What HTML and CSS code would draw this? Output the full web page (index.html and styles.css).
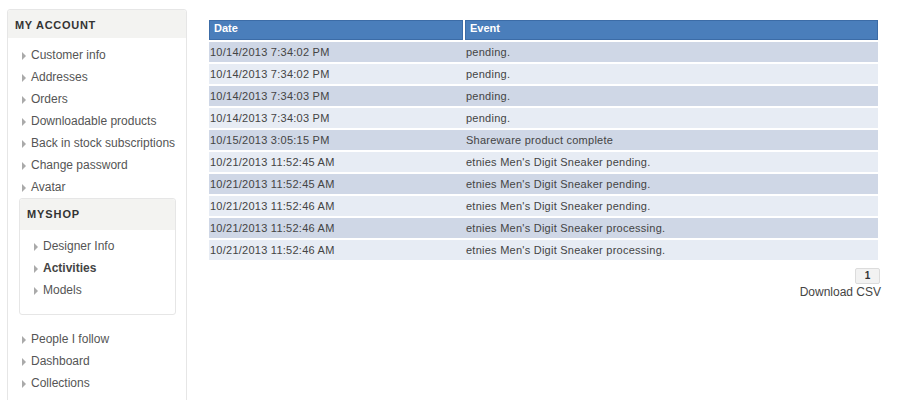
FILE: index.html
```html
<!DOCTYPE html>
<html>
<head>
<meta charset="utf-8">
<link rel="stylesheet" href="styles.css">
</head>
<body>
<div class="page">
  <aside class="sidebar">
    <div class="block-title">MY ACCOUNT</div>
    <ul class="nav">
      <li><span class="tri"></span>Customer info</li>
      <li><span class="tri"></span>Addresses</li>
      <li><span class="tri"></span>Orders</li>
      <li><span class="tri"></span>Downloadable products</li>
      <li><span class="tri"></span>Back in stock subscriptions</li>
      <li><span class="tri"></span>Change password</li>
      <li><span class="tri"></span>Avatar</li>
    </ul>
    <div class="subbox">
      <div class="sub-title">MYSHOP</div>
      <ul class="nav sub-nav">
        <li><span class="tri"></span>Designer Info</li>
        <li class="active"><span class="tri"></span>Activities</li>
        <li><span class="tri"></span>Models</li>
      </ul>
    </div>
    <ul class="nav nav-bottom">
      <li><span class="tri"></span>People I follow</li>
      <li><span class="tri"></span>Dashboard</li>
      <li><span class="tri"></span>Collections</li>
    </ul>
  </aside>
  <main class="content">
    <table class="grid">
      <thead>
        <tr><th class="col-date">Date</th><th>Event</th></tr>
      </thead>
      <tbody>
        <tr class="odd"><td>10/14/2013 7:34:02 PM</td><td>pending.</td></tr>
        <tr class="even"><td>10/14/2013 7:34:02 PM</td><td>pending.</td></tr>
        <tr class="odd"><td>10/14/2013 7:34:03 PM</td><td>pending.</td></tr>
        <tr class="even"><td>10/14/2013 7:34:03 PM</td><td>pending.</td></tr>
        <tr class="odd"><td>10/15/2013 3:05:15 PM</td><td>Shareware product complete</td></tr>
        <tr class="even"><td>10/21/2013 11:52:45 AM</td><td>etnies Men's Digit Sneaker pending.</td></tr>
        <tr class="odd"><td>10/21/2013 11:52:45 AM</td><td>etnies Men's Digit Sneaker pending.</td></tr>
        <tr class="even"><td>10/21/2013 11:52:46 AM</td><td>etnies Men's Digit Sneaker pending.</td></tr>
        <tr class="odd"><td>10/21/2013 11:52:46 AM</td><td>etnies Men's Digit Sneaker processing.</td></tr>
        <tr class="even"><td>10/21/2013 11:52:46 AM</td><td>etnies Men's Digit Sneaker processing.</td></tr>
      </tbody>
    </table>
    <div class="pager"><span class="page-btn">1</span></div>
    <div class="csv">Download CSV</div>
  </main>
</div>
</body>
</html>
```
FILE: styles.css
```css
html, body {
  margin: 0;
  padding: 0;
  background: #fff;
  font-family: Arial, "Liberation Sans", sans-serif;
}
.page {
  display: flex;
  align-items: flex-start;
  padding-left: 7px;
}
.sidebar {
  width: 180px;
  margin-top: 9px;
  border: 1px solid #e6e6e6;
  border-radius: 3px;
  height: 420px;
  box-sizing: border-box;
  flex: none;
}
.block-title {
  background: #f3f3f1;
  height: 28px;
  line-height: 30px;
  padding-left: 7px;
  font-size: 11px;
  font-weight: bold;
  letter-spacing: 0.7px;
  color: #333;
  border-radius: 3px 3px 0 0;
}
.nav {
  list-style: none;
  margin: 0;
  padding: 6px 0 0 14px;
}
.nav li {
  height: 22px;
  line-height: 22px;
  font-size: 12px;
  color: #555;
  display: flex;
  align-items: center;
}
.tri {
  width: 0;
  height: 0;
  border-top: 4px solid transparent;
  border-bottom: 4px solid transparent;
  border-left: 4px solid #aaa;
  margin-right: 5px;
  margin-top: 1px;
}
.subbox {
  margin: 0 10px 0 11px;
  border: 1px solid #e6e6e6;
  border-radius: 3px;
  padding-bottom: 13px;
}
.sub-title {
  background: #f3f3f1;
  height: 31px;
  line-height: 31px;
  padding-left: 7px;
  font-size: 11px;
  font-weight: bold;
  letter-spacing: 0.9px;
  color: #333;
  border-radius: 3px 3px 0 0;
}
.sub-nav {
  padding-left: 14px;
  padding-top: 5px;
}
.sub-nav li.active {
  font-weight: bold;
  color: #444;
}
.nav-bottom {
  padding-top: 13px;
}
.content {
  margin-left: 22px;
  width: 672px;
  flex: none;
}
.grid {
  width: 669px;
  margin-top: 18px;
  border-collapse: separate;
  border-spacing: 0 2px;
  font-size: 11px;
  letter-spacing: 0.25px;
  color: #444;
}
.grid th {
  background: #4a7ebb;
  color: #fff;
  text-align: left;
  font-weight: bold;
  height: 15px;
  padding: 0 0 5px 5px;
  box-shadow: inset 0 0 0 1px #3c6ca7;
  line-height: 14px;
  letter-spacing: 0;
}
.grid th.col-date {
  width: 249px;
  border-right: 2px solid #fff;
}
.grid td {
  height: 20px;
  padding: 0 0 0 1px;
  line-height: 20px;
}
.grid tr.odd td {
  background: #cfd7e6;
}
.grid tr.even td {
  background: #e7ecf4;
}
.pager {
  display: flex;
  justify-content: flex-end;
  margin-top: 6px;
  padding-right: 1px;
}
.page-btn {
  display: inline-block;
  width: 23px;
  height: 14px;
  line-height: 14px;
  text-align: center;
  font-size: 10px;
  font-weight: bold;
  color: #333;
  background: #f2f2f2;
  border: 1px solid #dcdcdc;
  border-radius: 2px;
}
.csv {
  text-align: right;
  font-size: 12px;
  color: #444;
  margin-top: 1px;
}
```
